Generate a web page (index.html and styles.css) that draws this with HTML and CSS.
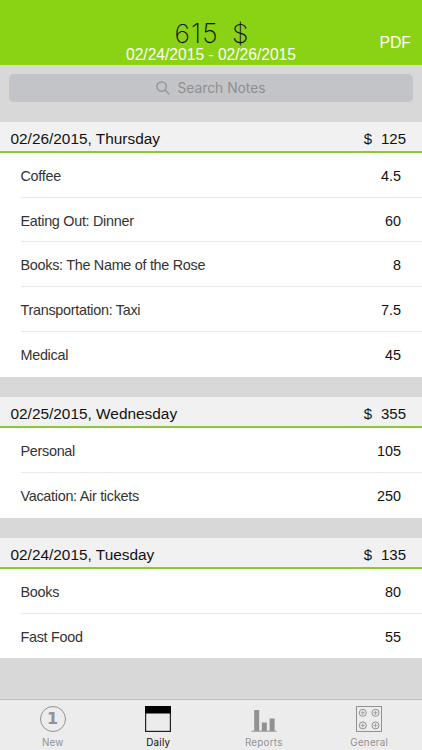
FILE: index.html
```
<!DOCTYPE html>
<html lang="en">
<head>
    <meta charset="UTF-8">
    <meta name="viewport" content="width=device-width, initial-scale=1.0">
    <title>Daily Expenses</title>
    <link rel="stylesheet" href="styles.css">
</head>
<body>
    <div class="app">
        <header class="header">
            <div></div>
            <div class="summary">
                <h1 class="total"><span>615</span><span>$</span></h1>
                <p class="period">02/24/2015 - 02/26/2015</p>
            </div>
            <a class="pdf-link" href="#">PDF</a>
        </header>

        <main class="content">
            <div class="search">
                <svg class="search-icon" viewBox="0 0 14 14" aria-hidden="true">
                    <circle cx="5.6" cy="5.6" r="4.7"/>
                    <path d="M9 9l4.3 4.3"/>
                </svg>
                <span>Search Notes</span>
            </div>

            <section class="day">
                <h2 class="day-header"><span>02/26/2015, Thursday</span><span class="day-total"><span>$</span><span>125</span></span></h2>
                <ul class="entries">
                    <li><span class="note">Coffee</span><span class="amount">4.5</span></li>
                    <li><span class="note">Eating Out: Dinner</span><span class="amount">60</span></li>
                    <li><span class="note">Books: The Name of the Rose</span><span class="amount">8</span></li>
                    <li><span class="note">Transportation: Taxi</span><span class="amount">7.5</span></li>
                    <li><span class="note">Medical</span><span class="amount">45</span></li>
                </ul>
            </section>

            <section class="day">
                <h2 class="day-header"><span>02/25/2015, Wednesday</span><span class="day-total"><span>$</span><span>355</span></span></h2>
                <ul class="entries">
                    <li><span class="note">Personal</span><span class="amount">105</span></li>
                    <li><span class="note">Vacation: Air tickets</span><span class="amount">250</span></li>
                </ul>
            </section>

            <section class="day">
                <h2 class="day-header"><span>02/24/2015, Tuesday</span><span class="day-total"><span>$</span><span>135</span></span></h2>
                <ul class="entries">
                    <li><span class="note">Books</span><span class="amount">80</span></li>
                    <li><span class="note">Fast Food</span><span class="amount">55</span></li>
                </ul>
            </section>
        </main>

        <nav class="tabs">
            <a class="tab" href="#">
                <span class="tab-icon coin">1</span>
                <span>New</span>
            </a>
            <a class="tab active" href="#">
                <svg class="tab-icon" viewBox="0 0 26 26" aria-hidden="true">
                    <rect x="0.6" y="0.6" width="24.8" height="24.8" fill="none" stroke="#222" stroke-width="1.2"/>
                    <rect width="26" height="7.5" fill="#000"/>
                </svg>
                <span>Daily</span>
            </a>
            <a class="tab" href="#">
                <svg class="tab-icon" viewBox="0 0 26 26" aria-hidden="true">
                    <path d="M3.2 4h5v21h-5zM10.8 16.5h5v8.5h-5zM18.6 12.5h5v12.5h-5z" fill="#929292"/>
                    <path d="M.5 25.2h25" stroke="#929292"/>
                </svg>
                <span>Reports</span>
            </a>
            <a class="tab" href="#">
                <svg class="tab-icon" viewBox="0 0 26 26" aria-hidden="true">
                    <g fill="none" stroke="#929292">
                        <rect x="0.5" y="0.5" width="25" height="25"/>
                        <circle cx="6.8" cy="6.8" r="3.5"/>
                        <circle cx="19.5" cy="6.8" r="3.5"/>
                        <circle cx="6.8" cy="19.4" r="3.5"/>
                        <circle cx="19.5" cy="19.4" r="3.5"/>
                        <path stroke-width="0.8" d="M4.8 6.8h4M6.8 4.8v4M17.5 6.8h4M19.5 4.8v4M4.8 19.4h4M6.8 17.4v4M17.5 19.4h4M19.5 17.4v4"/>
                    </g>
                </svg>
                <span>General</span>
            </a>
        </nav>
    </div>
</body>
</html>
```
FILE: styles.css
```
* {
    box-sizing: border-box;
}

body {
    margin: 0;
    font-family: "Liberation Sans", Arial, sans-serif;
    color: #111;
    background: #d8d8d8;
}

h1,
h2,
p,
ul {
    margin: 0;
    padding: 0;
    font-weight: normal;
}

a {
    color: inherit;
    text-decoration: none;
}

.app {
    display: flex;
    flex-direction: column;
    height: 100vh;
    overflow: hidden;
}

.header {
    display: grid;
    grid-template-columns: 1fr auto 1fr;
    height: 65px;
    padding: 0 11px;
    background: #8ad214;
}

.summary {
    padding-top: 19px;
    text-align: center;
}

.total {
    display: flex;
    justify-content: center;
    gap: 13px;
    padding-left: 2px;
    font-family: Inter, sans-serif;
    font-size: 26.5px;
    font-weight: 200;
    letter-spacing: 1.2px;
    line-height: 28px;
}

.period {
    color: #fff;
    font-size: 15.6px;
    line-height: 16px;
}

.pdf-link {
    justify-self: end;
    padding-top: 34px;
    color: #fff;
    font-size: 15.8px;
    line-height: 18px;
}

.content {
    flex: 1;
    min-height: 0;
}

.search {
    display: flex;
    align-items: center;
    justify-content: center;
    gap: 7px;
    height: 28px;
    margin: 9px 9px 20.2px;
    border-radius: 5px;
    background: #c3c4c7;
    color: #8e8e93;
    font-family: Inter, sans-serif;
    font-size: 13.8px;
}

.search-icon {
    width: 14px;
    height: 14px;
    fill: none;
    stroke: #8e8e93;
    stroke-width: 1.2;
}

.day {
    margin-bottom: 20.6px;
}

.day-header {
    display: flex;
    justify-content: space-between;
    height: 30.6px;
    padding: 0 16px 0 10.5px;
    border-bottom: 2px solid #8cc83a;
    background: #f1f1f1;
    font-size: 15.4px;
    line-height: 33px;
}

.day-total {
    display: flex;
    gap: 9px;
    font-size: 15px;
}

.entries {
    list-style: none;
    background: #fff;
}

.entries li {
    display: flex;
    justify-content: space-between;
    height: 44.8px;
    margin-left: 20.5px;
    padding-right: 21px;
    border-bottom: 1px solid #e9e9e9;
    font-size: 14.4px;
    line-height: 47px;
}

.entries li:last-child {
    border-bottom: none;
}

.note {
    color: #333;
    letter-spacing: -0.29px;
}

.tabs {
    display: grid;
    grid-template-columns: repeat(4, 1fr);
    height: 51px;
    padding-top: 6px;
    border-top: 1px solid #bfbfbf;
    background: #ececec;
}

.tab {
    display: flex;
    flex-direction: column;
    align-items: center;
    gap: 5px;
    color: #929292;
    font-family: Inter, sans-serif;
    font-size: 9.8px;
    letter-spacing: 0.25px;
    line-height: 12px;
}

.tab.active {
    color: #111;
}

.tab-icon {
    width: 26px;
    height: 26px;
}

.coin {
    border: 1px solid #929292;
    border-radius: 50%;
    font-family: "DejaVu Sans", sans-serif;
    font-size: 16px;
    font-weight: bold;
    line-height: 24px;
    text-align: center;
}
```
